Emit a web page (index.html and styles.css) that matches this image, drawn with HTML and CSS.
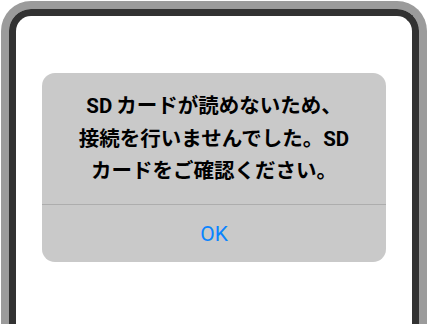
FILE: index.html
```html
<!DOCTYPE html>
<html>
<head>
<meta charset="utf-8">
	<title>SDカード</title>
	<link rel="stylesheet" href="styles.css">
</head>
<body>
<div class="phone">
	<div class="screen">
		<div class="alert">
			<p class="message"><span class="latin">SD</span>カードが読めないため、<br>接続を行いませんでした。SD<br>カードをご確認ください。</p>
			<div class="actions">
				<span class="ok">OK</span>
			</div>
		</div>
	</div>
</div>
</body>
</html>
```

FILE: styles.css
```css
*{
	margin: 0;
	padding: 0;
	box-sizing: border-box;
}
html,body{
	width: 100%;
	height: 100%;
	overflow: hidden;
	background: #fff;
}
body{
	padding: 1px 1px 0 1px;
	font-family: Roboto, "Noto Sans CJK JP", sans-serif;
}
.phone{
	height: 323px;
	border: 8px solid #9b9b9b;
	border-bottom: none;
	border-radius: 30px 30px 0 0;
}
.screen{
	height: 100%;
	border: 7px solid #323232;
	border-bottom: none;
	border-radius: 22px 22px 0 0;
	background: #fff;
	padding: 57px 26px 0 26px;
}
.alert{
	background: #c9c9c9;
	border-radius: 13px;
	overflow: hidden;
}
.message{
	height: 132px;
	padding-top: 17px;
	text-align: center;
	font-size: 20.5px;
	line-height: 32.5px;
	font-weight: bold;
	color: #000;
	border-bottom: 1px solid #adadad;
}
.latin{
	margin-right: 4px;
}
.actions{
	height: 57px;
	display: flex;
	align-items: center;
	justify-content: center;
}
.ok{
	font-size: 21px;
	color: #0a84ff;
}
```
